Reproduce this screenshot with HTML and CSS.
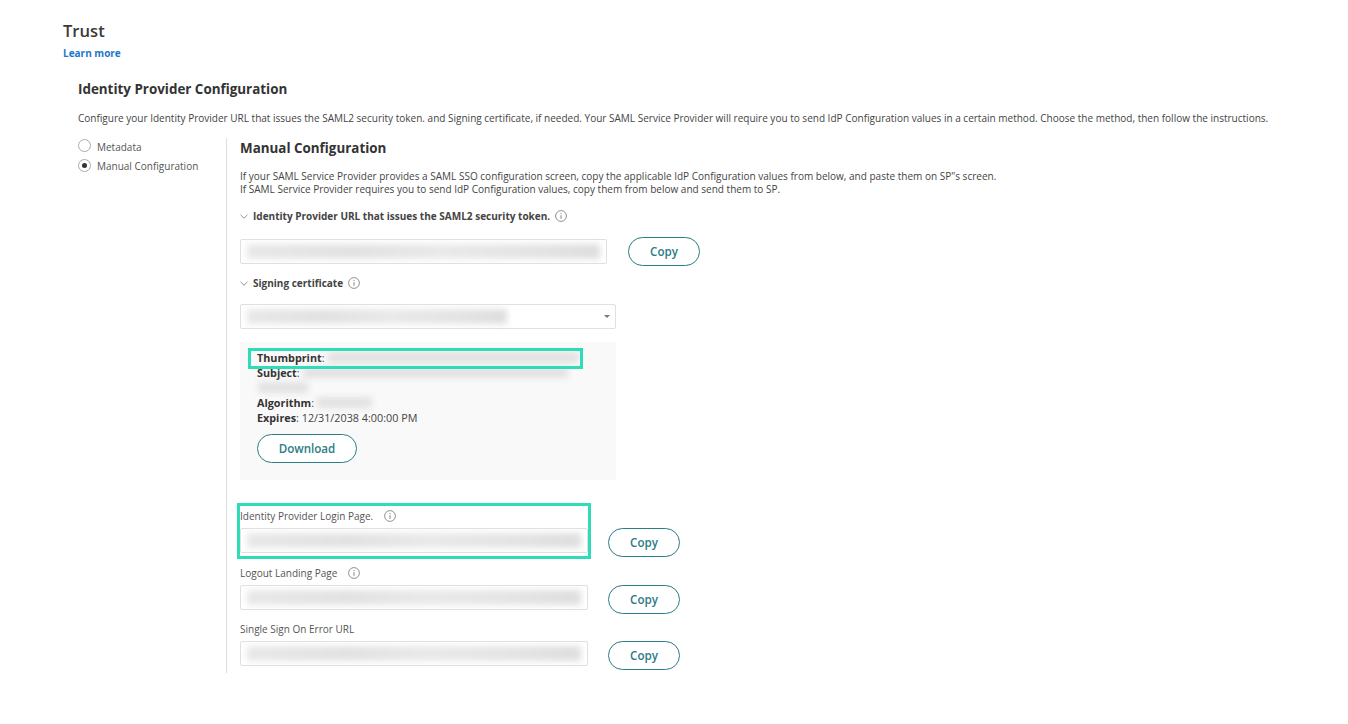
FILE: index.html
```html
<!DOCTYPE html>
<html lang="en">
<head>
  <meta charset="UTF-8">
  <title>Trust</title>
  <link rel="stylesheet" href="styles.css">
</head>
<body>
  <svg class="sprite" width="0" height="0">
    <symbol id="info" viewBox="0 0 12 12">
      <circle cx="6" cy="6" r="5.4" fill="none" stroke="#777" stroke-width="0.8"/>
      <path d="M6 5.2v3.6M6 3v1.1" fill="none" stroke="#777" stroke-width="0.9"/>
    </symbol>
    <symbol id="chev" viewBox="0 0 8 5">
      <path d="M0.5 0.8L4 4.2L7.5 0.8" fill="none" stroke="#777" stroke-width="0.8"/>
    </symbol>
  </svg>

  <h1 class="title">Trust</h1>
  <a class="learn" href="#">Learn more</a>

  <section class="idp">
    <h2 class="idp-head">Identity Provider Configuration</h2>
    <p class="idp-desc">Configure your Identity Provider URL that issues the SAML2 security token. and Signing certificate, if needed. Your SAML Service Provider will require you to send IdP Configuration values in a certain method. Choose the method, then follow the instructions.</p>

    <div class="columns">
      <div class="methods">
        <div class="method"><span class="radio"></span>Metadata</div>
        <div class="method"><span class="radio on"></span>Manual Configuration</div>
      </div>

      <div class="manual">
        <h3 class="manual-head">Manual Configuration</h3>
        <p class="manual-desc">If your SAML Service Provider provides a SAML SSO configuration screen, copy the applicable IdP Configuration values from below, and paste them on SP"s screen.<br>If SAML Service Provider requires you to send IdP Configuration values, copy them from below and send them to SP.</p>

        <div class="acc-label acc-first">
          <svg class="chev"><use href="#chev"/></svg>Identity Provider URL that issues the SAML2 security token.
          <svg class="info"><use href="#info"/></svg>
        </div>
        <div class="url-row">
          <div class="input url-input"><div class="smear"></div></div>
          <button class="pill copy">Copy</button>
        </div>

        <div class="acc-label acc-second">
          <svg class="chev"><use href="#chev"/></svg>Signing certificate
          <svg class="info"><use href="#info"/></svg>
        </div>
        <div class="input select">
          <div class="smear smear-select"></div>
          <span class="caret"></span>
        </div>

        <div class="cert">
          <div class="mark mark-thumb"></div>
          <div class="cert-line"><b>Thumbprint</b>:<span class="smear-inline w-thumb"></span></div>
          <div class="cert-line"><b>Subject</b>:<span class="smear-inline w-subject"></span></div>
          <div class="cert-line"><span class="smear-inline w-extra"></span></div>
          <div class="cert-line"><b>Algorithm</b>:<span class="smear-inline w-algo"></span></div>
          <div class="cert-line"><b>Expires</b>:&nbsp;12/31/2038 4:00:00 PM</div>
          <button class="pill download">Download</button>
        </div>

        <div class="fields">
          <div class="mark mark-login"></div>
          <div class="field">
            <label class="field-label">Identity Provider Login Page.<svg class="info"><use href="#info"/></svg></label>
            <div class="input"><div class="smear"></div></div>
            <button class="pill copy">Copy</button>
          </div>
          <div class="field">
            <label class="field-label">Logout Landing Page<svg class="info"><use href="#info"/></svg></label>
            <div class="input"><div class="smear"></div></div>
            <button class="pill copy">Copy</button>
          </div>
          <div class="field">
            <label class="field-label">Single Sign On Error URL</label>
            <div class="input"><div class="smear"></div></div>
            <button class="pill copy">Copy</button>
          </div>
        </div>
      </div>
    </div>
  </section>
</body>
</html>
```

FILE: styles.css
```css
body {
  margin: 0;
  padding: 21px 0 0 63px;
  background-color: #fff;
  color: #444;
  font-family: "Open Sans", sans-serif;
  font-size: 10px;
}
.sprite {
  position: absolute;
}
.title {
  margin: 0;
  font-size: 16.6px;
  line-height: 20px;
  font-weight: 600;
  color: #3a3a3a;
}
.learn {
  display: block;
  margin-top: 6px;
  font-size: 10px;
  line-height: 13px;
  font-weight: 700;
  color: #1f77c9;
  text-decoration: none;
}
.idp {
  padding-left: 15px;
}
.idp-head {
  margin: 20px 0 0;
  font-size: 13.4px;
  line-height: 18px;
  font-weight: 700;
  color: #333;
}
.idp-desc {
  margin: 13px 0 0;
  font-size: 10.03px;
  line-height: 14px;
  white-space: nowrap;
}
.columns {
  display: flex;
  margin-top: 12px;
}
.methods {
  width: 148px;
}
.method {
  display: flex;
  align-items: center;
  height: 19.6px;
  font-size: 10px;
  color: #555;
}
.radio {
  width: 11px;
  height: 11px;
  margin-right: 6px;
  border: 1px solid #aaa;
  border-radius: 50%;
  background-color: #fff;
  position: relative;
  top: -1px;
}
.radio.on::after {
  content: "";
  position: absolute;
  left: 3px;
  top: 3px;
  width: 5px;
  height: 5px;
  border-radius: 50%;
  background-color: #333;
}
.manual {
  width: 600px;
  height: 535px;
  margin-top: 1px;
  padding-left: 13px;
  border-left: 1px solid #ddd;
}
.manual-head {
  margin: 2px 0 0;
  font-size: 13.4px;
  line-height: 17px;
  font-weight: 700;
  color: #333;
}
.manual-desc {
  margin: 13px 0 0;
  font-size: 10.03px;
  line-height: 13px;
  white-space: nowrap;
}
.acc-label {
  display: flex;
  align-items: center;
  height: 14px;
  font-size: 10.03px;
  font-weight: 700;
}
.acc-first {
  margin-top: 13px;
}
.acc-second {
  margin-top: 10px;
}
.chev {
  width: 8px;
  height: 5px;
  margin-right: 5px;
}
.info {
  width: 12px;
  height: 12px;
  margin-left: 5px;
}
.url-row {
  display: flex;
  align-items: center;
  margin-top: 14px;
}
.input {
  box-sizing: border-box;
  height: 25px;
  padding: 4px 6px;
  border: 1px solid #e0e0e0;
  border-radius: 2px;
  background-color: #fff;
}
.url-input {
  width: 367px;
}
.smear {
  height: 15px;
  background: linear-gradient(90deg, #e8e8e8, #e2e2e2 30%, #e9e9e9 55%, #e4e4e4 80%, #dedede);
  filter: blur(3px);
}
.pill {
  border: 1px solid #2b7c85;
  border-radius: 15px;
  background-color: #fff;
  color: #2b7c85;
  font-family: "Open Sans", sans-serif;
  font-size: 11.6px;
  font-weight: 600;
  padding: 0;
}
.copy {
  width: 72px;
  height: 29px;
}
.url-row .copy {
  margin-left: 21px;
}
.select {
  position: relative;
  width: 376px;
  margin-top: 14px;
}
.smear-select {
  width: 260px;
}
.caret {
  position: absolute;
  right: 5px;
  top: 10px;
  border-left: 3px solid transparent;
  border-right: 3px solid transparent;
  border-top: 3px solid #777;
}
.cert {
  position: relative;
  box-sizing: border-box;
  width: 376px;
  height: 138px;
  margin-top: 13px;
  padding: 8px 17px 0;
  background-color: #f9f9f9;
}
.cert-line {
  display: flex;
  align-items: center;
  height: 15px;
  font-size: 10.8px;
}
.cert-line b {
  font-weight: 700;
  color: #333;
}
.smear-inline {
  display: block;
  height: 11px;
  margin-left: 3px;
  background-color: #e2e2e2;
  filter: blur(3px);
}
.w-thumb { width: 251px; }
.w-subject { width: 265px; }
.w-extra { width: 50px; margin-left: 1px; }
.w-algo { width: 55px; }
.download {
  display: block;
  width: 100px;
  height: 29px;
  margin-top: 9px;
}
.mark {
  position: absolute;
  z-index: 1;
  box-sizing: border-box;
  border: 3px solid #2fdcb8;
}
.mark-thumb {
  left: 8px;
  top: 6px;
  width: 335px;
  height: 21px;
}
.fields {
  position: relative;
  margin-top: 30px;
}
.mark-login {
  left: -3px;
  top: -7px;
  width: 354px;
  height: 56px;
}
.field {
  display: grid;
  grid-template-columns: 348px 72px;
  grid-template-rows: 18px 29px;
  column-gap: 20px;
  height: 56.5px;
}
.field-label {
  grid-column: 1 / 3;
  display: flex;
  align-items: center;
  height: 12px;
  font-size: 10px;
  color: #555;
}
.field-label .info {
  margin-left: 11px;
}
```
